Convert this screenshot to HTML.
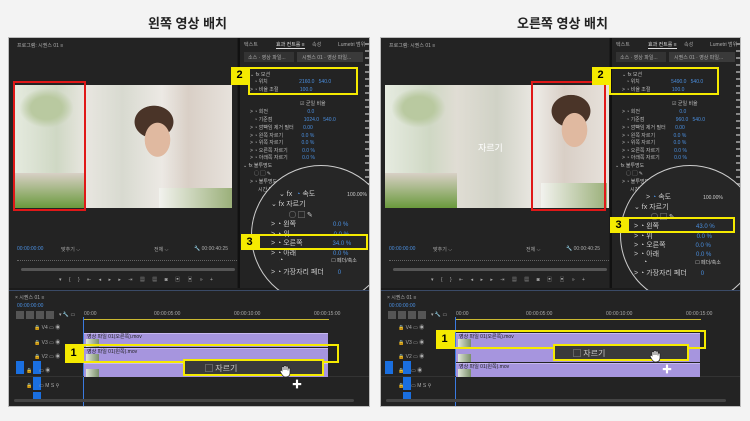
<!DOCTYPE html>
<html><head><meta charset="utf-8">
<style>
*{margin:0;padding:0;box-sizing:border-box}
body{width:750px;height:421px;background:#f3f3f3;position:relative;overflow:hidden;font-family:"Liberation Sans","Noto Sans CJK KR",sans-serif}
.a{position:absolute}
.title{position:absolute;top:13px;font-size:13px;font-weight:bold;color:#222;width:375px;text-align:center}
.half{position:absolute;top:37px;height:370px;background:#1b1b1b;overflow:hidden;border:1px solid #bbb}
.mon{position:absolute;left:0;top:0;height:250px;background:#232323}
.eff{position:absolute;top:0;height:250px;background:#232323;border-left:2px solid #111;overflow:hidden}
.tl{position:absolute;left:0;top:252px;height:118px;background:#232323;border-top:1px solid #3a4a66}
.t{position:absolute;font-size:5px;color:#aaa;white-space:nowrap}
.b{color:#4a8fe0}
.row{position:absolute;left:10px;font-size:5px;color:#bbb;white-space:nowrap}
.yb{position:absolute;border:2px solid #f5ea00}
.yl{position:absolute;background:#f5ea00;color:#000;font-weight:bold;font-size:11px;text-align:center;line-height:17px;width:17px;height:18px}
.clip{position:absolute;background:#a695de;border-top:1px solid #c7b9f0}
.th{position:absolute;left:2px;top:5px;width:13px;height:8px;background:linear-gradient(90deg,#dfe6d8,#7a8f6a)}
.circle{position:absolute;border-radius:50%;border:1px solid #ccc;background:#262626}
.big{position:absolute;font-size:7px;color:#ccc;white-space:nowrap}
.tlab{position:absolute;font-size:5px;color:#aaa}
.blue{position:absolute;background:#1a6fe0;width:8px;height:13px}
</style></head><body>
<div class="title" style="left:0">왼쪽 영상 배치</div>
<div class="title" style="left:375px">오른쪽 영상 배치</div>

<!-- LEFT -->
<div class="half" style="left:8px;width:362px">
 <div class="mon" style="width:228px">
  <div class="t" style="left:8px;top:4px">프로그램: 시퀀스 01 ≡</div>
  <div class="a" style="left:4px;top:47px;width:219px;height:123px;background:linear-gradient(90deg,#e6ebe0 0,#cfd8c4 20%,#e8e6e0 33%,#d8dad0 50%,#ece9e4 68%,#d9cfc6 80%,#e7e2dc 100%)"></div>
  <div class="a" style="left:10px;top:50px;width:55px;height:40px;background:radial-gradient(ellipse at 50% 50%,#b9c9a0 40%,transparent 70%)"></div>
  <div class="a" style="left:4px;top:135px;width:72px;height:35px;background:linear-gradient(180deg,#d8d0c6,#6a9a3c)"></div>
  <div class="a" style="left:110px;top:65px;width:70px;height:105px;background:radial-gradient(ellipse 18px 24px at 55% 35%,#e0b9a0 70%,transparent 72%),radial-gradient(ellipse 24px 20px at 50% 18%,#4a3428 80%,transparent 82%)"></div>
  <div class="a" style="left:150px;top:150px;width:73px;height:20px;background:linear-gradient(90deg,#f2f2ee,#9bb07a)"></div>
  <div class="a" style="left:4px;top:43px;width:73px;height:130px;border:2px solid #e01818"></div>
  <div class="t b" style="left:8px;top:208px">00:00:00:00</div>
  <div class="t" style="left:52px;top:208px">맞추기 ⌵</div>
  <div class="t" style="left:145px;top:208px">전체 ⌵</div>
  <div class="t" style="left:185px;top:208px">🔧 00:00:40:25</div>
  <div class="a" style="left:8px;top:222px;width:220px;height:1px;border-top:1px dotted #666"></div>
  <div class="a" style="left:12px;top:230px;width:214px;height:3px;background:#555;border-radius:2px"></div>
  <div class="t" style="left:50px;top:238px;letter-spacing:3px">▾ { } ⇤ ◂ ▸ ▸ ⇥ ▦ ▦ ◙ ▣ ▣ » +</div>
 </div>
 <div class="eff" style="left:229px;width:133px">
  <div class="t" style="left:4px;top:3px">텍스트</div><div class="t" style="left:36px;top:3px;color:#ddd;border-bottom:1px solid #ddd">효과 컨트롤 ≡</div><div class="t" style="left:72px;top:3px">속성</div><div class="t" style="left:98px;top:3px">Lumetri 범위</div>
  <div class="a" style="left:4px;top:14px;width:50px;height:10px;background:#333"></div><div class="a" style="left:57px;top:14px;width:66px;height:10px;background:#3a3a3a"></div>
  <div class="t" style="left:8px;top:16px">소스 · 영상 파일...</div><div class="t" style="left:62px;top:16px">시퀀스 01 · 영상 파일...</div>
  <div class="row" style="top:33px">⌄ fx 모션</div>
  <div class="row" style="top:40px">&nbsp;&nbsp; ◔ 위치 <span class="b" style="margin-left:30px">2160.0 &nbsp; 540.0</span></div>
  <div class="row" style="top:48px">&gt; ◔ 비율 조절 <span class="b" style="margin-left:20px">100.0</span></div>
  <div class="row" style="top:62px;left:60px">☑ 균일 비율</div>
  <div class="row" style="top:70px">&gt; ◔ 회전 <span class="b" style="margin-left:38px">0.0</span></div>
  <div class="row" style="top:78px">&nbsp;&nbsp; ◔ 기준점 <span class="b" style="margin-left:30px">1024.0 &nbsp; 540.0</span></div>
  <div class="row" style="top:86px">&gt; ◔ 깜빡임 제거 필터 <span class="b" style="margin-left:8px">0.00</span></div>
  <div class="row" style="top:94px">&gt; ◔ 왼쪽 자르기 <span class="b" style="margin-left:17px">0.0 %</span></div>
  <div class="row" style="top:101px">&gt; ◔ 위쪽 자르기 <span class="b" style="margin-left:17px">0.0 %</span></div>
  <div class="row" style="top:109px">&gt; ◔ 오른쪽 자르기 <span class="b" style="margin-left:13px">0.0 %</span></div>
  <div class="row" style="top:116px">&gt; ◔ 아래쪽 자르기 <span class="b" style="margin-left:13px">0.0 %</span></div>
  <div class="row" style="top:124px;left:3px">⌄ fx 불투명도</div>
  <div class="row" style="top:132px;left:14px">◯ ▢ ✎</div>
  <div class="row" style="top:140px">&gt; ◔ 불투명도 혼합 모드</div>
  <div class="row" style="top:148px;left:18px">시간 다시 매핑</div>
  <div class="a" style="left:125px;top:0;width:8px;height:250px;background:repeating-linear-gradient(180deg,transparent 0,transparent 5px,#888 5px,#888 7px)"></div>
 </div>
 <div class="circle" style="left:242px;top:127px;width:140px;height:140px"></div>
 <div class="big" style="left:270px;top:151px">⌄ fx &nbsp;<span class="b">◔</span> 속도 <span style="margin-left:30px;font-size:5px">100.00%</span></div>
 <div class="big" style="left:262px;top:161px">⌄ fx 자르기</div>
 <div class="big" style="left:280px;top:172px">◯ ▢ ✎</div>
 <div class="big" style="left:262px;top:181px">&gt; ◔ 왼쪽 <span class="b" style="margin-left:35px;font-size:6px">0.0 %</span></div>
 <div class="big" style="left:262px;top:191px">&gt; ◔ 위 <span class="b" style="margin-left:42px;font-size:6px">0.0 %</span></div>
 <div class="big" style="left:262px;top:200px">&gt; ◔ 오른쪽 <span class="b" style="margin-left:28px;font-size:6px">34.0 %</span></div>
 <div class="big" style="left:262px;top:210px">&gt; ◔ 아래 <span class="b" style="margin-left:35px;font-size:6px">0.0 %</span></div>
 <div class="big" style="left:270px;top:219px">◔ <span style="margin-left:46px;font-size:5px">☐ 페더/축소</span></div>
 <div class="big" style="left:262px;top:229px">&gt; ◔ 가장자리 페더 <span class="b" style="margin-left:12px;font-size:6px">0</span></div>
 <div class="yb" style="left:239px;top:29px;width:110px;height:28px"></div>
 <div class="yl" style="left:222px;top:29px">2</div>
 <div class="yb" style="left:249px;top:196px;width:110px;height:16px"></div>
 <div class="yl" style="left:232px;top:196px;height:16px;line-height:16px">3</div>
 <div class="tl" style="width:360px">
  <div class="t" style="left:6px;top:3px">× 시퀀스 01 ≡</div>
  <div class="t b" style="left:8px;top:12px">00:00:00:00</div>
  <div class="a" style="left:7px;top:20px;width:40px;height:8px;background:repeating-linear-gradient(90deg,#555 0,#555 8px,transparent 8px,transparent 10px)"></div>
  <div class="t" style="left:50px;top:21px">▾ 🔧 ▭</div>
  <div class="t" style="left:75px;top:20px">00:00</div><div class="t" style="left:145px;top:20px">00:00:05:00</div><div class="t" style="left:225px;top:20px">00:00:10:00</div><div class="t" style="left:305px;top:20px">00:00:15:00</div>
  <div class="a" style="left:75px;top:28px;width:245px;height:1px;background:#c9b830"></div>
  <div class="a" style="left:74px;top:26px;width:1px;height:92px;background:#3a7ae0"></div>
  <div class="tlab" style="left:25px;top:33px">🔒 V4 ▭ ◉</div>
  <div class="tlab" style="left:25px;top:48px">🔒 V3 ▭ ◉</div>
  <div class="tlab" style="left:25px;top:62px">🔒 V2 ▭ ◉</div>
  <div class="blue" style="left:7px;top:70px"></div><div class="blue" style="left:24px;top:70px"></div>
  <div class="tlab" style="left:17px;top:76px">🔒 &nbsp;&nbsp;&nbsp; ▭ ◉</div>
  <div class="blue" style="left:24px;top:86px"></div><div class="blue" style="left:24px;top:101px;height:10px"></div>
  <div class="tlab" style="left:17px;top:92px">🔒 &nbsp;&nbsp;&nbsp; ▭ M S ⚲</div>
  <div class="a" style="left:0;top:85px;width:360px;height:1px;background:#333"></div>
  <div class="clip" style="left:75px;top:42px;width:244px;height:14px"><div class="th"></div></div>
  <div class="clip" style="left:75px;top:57px;width:244px;height:14px"><div class="th"></div></div>
  <div class="clip" style="left:75px;top:72px;width:244px;height:14px"><div class="th"></div></div>
  <div class="t" style="left:78px;top:42px;color:#222">영상 파일 01(오른쪽).mov</div>
  <div class="t" style="left:78px;top:57px;color:#222">영상 파일 01(왼쪽).mov</div>
  <div class="a" style="left:5px;top:108px;width:340px;height:3px;background:#444;border-radius:2px"></div>
 </div>
 <div class="yb" style="left:73px;top:306px;width:257px;height:19px"></div>
 <div class="yl" style="left:56px;top:306px;height:19px;line-height:19px">1</div>
 <div class="yb" style="left:174px;top:321px;width:141px;height:17px;background:#3a3a3a"></div>
 <div class="big" style="left:196px;top:325px;font-size:8px">▢ 자르기</div>
 <svg class="a" style="left:270px;top:326px" width="14" height="14" viewBox="0 0 14 14"><path d="M3 6V3.5a1 1 0 0 1 2 0V6V2.5a1 1 0 0 1 2 0V6V3a1 1 0 0 1 2 0v3.5V5a1 1 0 0 1 2 0v4c0 2.5-1.8 4-4 4H6.5C4.5 13 3 11 2 9L1.2 7.5a1 1 0 0 1 1.8-.8z" fill="#fff" stroke="#222" stroke-width=".7"/></svg>
 <div class="a" style="left:283px;top:338px;font-size:10px;color:#fff">✚</div>
</div>

<!-- RIGHT -->
<div class="half" style="left:380px;width:361px">
 <div class="mon" style="width:228px">
  <div class="t" style="left:8px;top:4px">프로그램: 시퀀스 01 ≡</div>
  <div class="a" style="left:4px;top:47px;width:224px;height:123px;background:linear-gradient(90deg,#e6ebe0 0,#cfd8c4 20%,#e0ddd4 32%,#d0d2c6 50%,#ece9e4 68%,#d9cfc6 80%,#e7e2dc 100%)"></div>
  <div class="a" style="left:10px;top:50px;width:55px;height:40px;background:radial-gradient(ellipse at 50% 50%,#b9c9a0 40%,transparent 70%)"></div>
  <div class="a" style="left:4px;top:135px;width:72px;height:35px;background:linear-gradient(180deg,#d8d0c6,#6a9a3c)"></div>
  <div class="a" style="left:155px;top:50px;width:70px;height:105px;background:radial-gradient(ellipse 18px 24px at 55% 40%,#e0b9a0 70%,transparent 72%),radial-gradient(ellipse 24px 20px at 50% 22%,#4a3428 80%,transparent 82%)"></div>
  <div class="a" style="left:160px;top:145px;width:66px;height:25px;background:linear-gradient(90deg,#f2f2ee,#9bb07a)"></div>
  <div class="big" style="left:97px;top:103px;font-size:9px;color:#fff">자르기</div>
  <div class="a" style="left:150px;top:43px;width:75px;height:130px;border:2px solid #e01818"></div>
  <div class="t b" style="left:8px;top:208px">00:00:00:00</div>
  <div class="t" style="left:52px;top:208px">맞추기 ⌵</div>
  <div class="t" style="left:145px;top:208px">전체 ⌵</div>
  <div class="t" style="left:185px;top:208px">🔧 00:00:40:25</div>
  <div class="a" style="left:8px;top:222px;width:220px;height:1px;border-top:1px dotted #666"></div>
  <div class="a" style="left:12px;top:230px;width:214px;height:3px;background:#555;border-radius:2px"></div>
  <div class="t" style="left:50px;top:238px;letter-spacing:3px">▾ { } ⇤ ◂ ▸ ▸ ⇥ ▦ ▦ ◙ ▣ ▣ » +</div>
 </div>
 <div class="eff" style="left:229px;width:132px">
  <div class="t" style="left:4px;top:3px">텍스트</div><div class="t" style="left:36px;top:3px;color:#ddd;border-bottom:1px solid #ddd">효과 컨트롤 ≡</div><div class="t" style="left:72px;top:3px">속성</div><div class="t" style="left:98px;top:3px">Lumetri 범위</div>
  <div class="a" style="left:4px;top:14px;width:50px;height:10px;background:#333"></div><div class="a" style="left:57px;top:14px;width:66px;height:10px;background:#3a3a3a"></div>
  <div class="t" style="left:8px;top:16px">소스 · 영상 파일...</div><div class="t" style="left:62px;top:16px">시퀀스 01 · 영상 파일...</div>
  <div class="row" style="top:33px">⌄ fx 모션</div>
  <div class="row" style="top:40px">&nbsp;&nbsp; ◔ 위치 <span class="b" style="margin-left:30px">5490.0 &nbsp; 540.0</span></div>
  <div class="row" style="top:48px">&gt; ◔ 비율 조절 <span class="b" style="margin-left:20px">100.0</span></div>
  <div class="row" style="top:62px;left:60px">☑ 균일 비율</div>
  <div class="row" style="top:70px">&gt; ◔ 회전 <span class="b" style="margin-left:38px">0.0</span></div>
  <div class="row" style="top:78px">&nbsp;&nbsp; ◔ 기준점 <span class="b" style="margin-left:30px">960.0 &nbsp; 540.0</span></div>
  <div class="row" style="top:86px">&gt; ◔ 깜빡임 제거 필터 <span class="b" style="margin-left:8px">0.00</span></div>
  <div class="row" style="top:94px">&gt; ◔ 왼쪽 자르기 <span class="b" style="margin-left:17px">0.0 %</span></div>
  <div class="row" style="top:101px">&gt; ◔ 위쪽 자르기 <span class="b" style="margin-left:17px">0.0 %</span></div>
  <div class="row" style="top:109px">&gt; ◔ 오른쪽 자르기 <span class="b" style="margin-left:13px">0.0 %</span></div>
  <div class="row" style="top:116px">&gt; ◔ 아래쪽 자르기 <span class="b" style="margin-left:13px">0.0 %</span></div>
  <div class="row" style="top:124px;left:3px">⌄ fx 불투명도</div>
  <div class="row" style="top:132px;left:14px">◯ ▢ ✎</div>
  <div class="row" style="top:140px">&gt; ◔ 불투명도 혼합 모드</div>
  <div class="row" style="top:148px;left:18px">시간 다시 매핑</div>
  <div class="a" style="left:124px;top:0;width:8px;height:250px;background:repeating-linear-gradient(180deg,transparent 0,transparent 5px,#888 5px,#888 7px)"></div>
 </div>
 <div class="circle" style="left:239px;top:127px;width:140px;height:140px"></div>
 <div class="big" style="left:265px;top:154px">&gt; <span class="b">◔</span> 속도 <span style="margin-left:30px;font-size:5px">100.00%</span></div>
 <div class="big" style="left:253px;top:164px">⌄ fx 자르기</div>
 <div class="big" style="left:270px;top:174px">◯ ▢ ✎</div>
 <div class="big" style="left:253px;top:183px">&gt; ◔ 왼쪽 <span class="b" style="margin-left:35px;font-size:6px">43.0 %</span></div>
 <div class="big" style="left:253px;top:193px">&gt; ◔ 위 <span class="b" style="margin-left:42px;font-size:6px">0.0 %</span></div>
 <div class="big" style="left:253px;top:202px">&gt; ◔ 오른쪽 <span class="b" style="margin-left:28px;font-size:6px">0.0 %</span></div>
 <div class="big" style="left:253px;top:211px">&gt; ◔ 아래 <span class="b" style="margin-left:35px;font-size:6px">0.0 %</span></div>
 <div class="big" style="left:262px;top:221px">◔ <span style="margin-left:46px;font-size:5px">☐ 페더/축소</span></div>
 <div class="big" style="left:253px;top:230px">&gt; ◔ 가장자리 페더 <span class="b" style="margin-left:12px;font-size:6px">0</span></div>
 <div class="yb" style="left:228px;top:29px;width:110px;height:28px"></div>
 <div class="yl" style="left:211px;top:29px">2</div>
 <div class="yb" style="left:246px;top:179px;width:108px;height:16px"></div>
 <div class="yl" style="left:229px;top:179px;height:16px;line-height:16px">3</div>
 <div class="tl" style="width:360px">
  <div class="t" style="left:6px;top:3px">× 시퀀스 01 ≡</div>
  <div class="t b" style="left:8px;top:12px">00:00:00:00</div>
  <div class="a" style="left:7px;top:20px;width:40px;height:8px;background:repeating-linear-gradient(90deg,#555 0,#555 8px,transparent 8px,transparent 10px)"></div>
  <div class="t" style="left:50px;top:21px">▾ 🔧 ▭</div>
  <div class="t" style="left:75px;top:20px">00:00</div><div class="t" style="left:145px;top:20px">00:00:05:00</div><div class="t" style="left:225px;top:20px">00:00:10:00</div><div class="t" style="left:305px;top:20px">00:00:15:00</div>
  <div class="a" style="left:75px;top:28px;width:245px;height:1px;background:#c9b830"></div>
  <div class="a" style="left:74px;top:26px;width:1px;height:92px;background:#3a7ae0"></div>
  <div class="tlab" style="left:17px;top:33px">🔒 V4 ▭ ◉</div>
  <div class="tlab" style="left:17px;top:48px">🔒 V3 ▭ ◉</div>
  <div class="tlab" style="left:17px;top:62px">🔒 V2 ▭ ◉</div>
  <div class="blue" style="left:4px;top:70px"></div><div class="blue" style="left:22px;top:70px"></div>
  <div class="tlab" style="left:17px;top:76px">🔒 &nbsp;&nbsp;&nbsp; ▭ ◉</div>
  <div class="blue" style="left:22px;top:86px"></div><div class="blue" style="left:22px;top:101px;height:10px"></div>
  <div class="tlab" style="left:17px;top:92px">🔒 &nbsp;&nbsp;&nbsp; ▭ M S ⚲</div>
  <div class="a" style="left:0;top:85px;width:360px;height:1px;background:#333"></div>
  <div class="clip" style="left:75px;top:42px;width:244px;height:14px"><div class="th"></div></div>
  <div class="clip" style="left:75px;top:57px;width:244px;height:14px"><div class="th"></div></div>
  <div class="clip" style="left:75px;top:72px;width:244px;height:14px"><div class="th"></div></div>
  <div class="t" style="left:78px;top:42px;color:#222">영상 파일 01(오른쪽).mov</div>
  <div class="t" style="left:78px;top:72px;color:#222">영상 파일 01(왼쪽).mov</div>
  <div class="a" style="left:5px;top:108px;width:340px;height:3px;background:#444;border-radius:2px"></div>
 </div>
 <div class="yb" style="left:72px;top:292px;width:253px;height:19px"></div>
 <div class="yl" style="left:55px;top:292px;height:19px;line-height:19px">1</div>
 <div class="yb" style="left:172px;top:306px;width:136px;height:17px;background:#3a3a3a"></div>
 <div class="big" style="left:192px;top:310px;font-size:8px">▢ 자르기</div>
 <svg class="a" style="left:268px;top:311px" width="14" height="14" viewBox="0 0 14 14"><path d="M3 6V3.5a1 1 0 0 1 2 0V6V2.5a1 1 0 0 1 2 0V6V3a1 1 0 0 1 2 0v3.5V5a1 1 0 0 1 2 0v4c0 2.5-1.8 4-4 4H6.5C4.5 13 3 11 2 9L1.2 7.5a1 1 0 0 1 1.8-.8z" fill="#fff" stroke="#222" stroke-width=".7"/></svg>
 <div class="a" style="left:281px;top:323px;font-size:10px;color:#fff">✚</div>
</div>
</body></html>
